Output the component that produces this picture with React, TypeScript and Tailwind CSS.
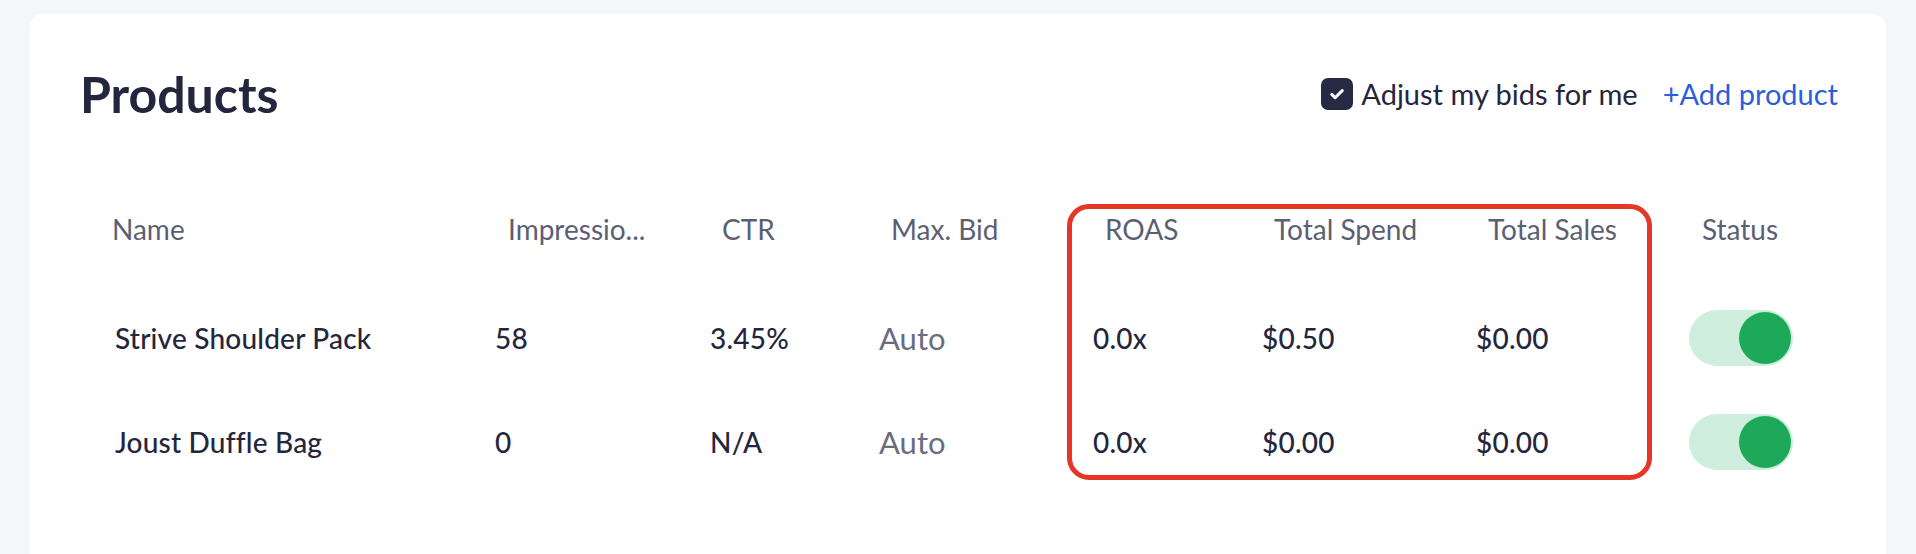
import { useState } from 'react';

type Product = {
  name: string;
  impressions: string;
  ctr: string;
  maxBid: string;
  roas: string;
  spend: string;
  sales: string;
  active: boolean;
};

const products: Product[] = [
  { name: 'Strive Shoulder Pack', impressions: '58', ctr: '3.45%', maxBid: 'Auto', roas: '0.0x', spend: '$0.50', sales: '$0.00', active: true },
  { name: 'Joust Duffle Bag', impressions: '0', ctr: 'N/A', maxBid: 'Auto', roas: '0.0x', spend: '$0.00', sales: '$0.00', active: true },
];

// explicit placement so the highlight box can share cells with the table
const cols = ['col-start-1', 'col-start-2', 'col-start-3', 'col-start-4', 'col-start-5', 'col-start-6', 'col-start-7', 'col-start-8'];
const rows = ['row-start-1', 'row-start-2', 'row-start-3'];

const headers = [
  { label: 'Name', pad: 'pl-[32px]' },
  { label: 'Impressio...', pad: 'pl-[13px]' },
  { label: 'CTR', pad: 'pl-[12px]' },
  { label: 'Max. Bid', pad: 'pl-[12px]' },
  { label: 'ROAS', pad: 'pl-[12px]' },
  { label: 'Total Spend', pad: 'pl-[12px]' },
  { label: 'Total Sales', pad: 'pl-[12px]' },
  { label: 'Status', pad: 'pl-[13px]' },
];

const Toggle = ({ on, onChange }: { on: boolean; onChange: () => void }) => (
  <button
    type="button"
    onClick={onChange}
    className={`flex items-center w-[104px] h-[56px] rounded-full px-[2px] ${on ? 'bg-[#cfeedd] justify-end' : 'bg-gray-200 justify-start'}`}
  >
    <span className={`block w-[52px] h-[52px] rounded-full ${on ? 'bg-[#1ea95a] ring-1 ring-[#bff3d2]' : 'bg-white'}`} />
  </button>
);

export default function App() {
  const [adjust, setAdjust] = useState(true);
  const [status, setStatus] = useState(products.map(p => p.active));

  const header = 'row-start-1 h-[82px] pt-[7px] text-[28px] leading-[36px] text-[#5c5f73] whitespace-nowrap';
  const base = 'h-[104px] flex items-center whitespace-nowrap';
  const cell = `${base} text-[28px] tracking-[0.2px] font-medium text-[#24263d]`;
  const muted = `${base} text-[31px] font-normal text-[#6a6c80]`;

  return (
    <div className="min-h-screen bg-[#f5f6f9] pt-[14px] px-[30px] font-['Lato',sans-serif]">
      <div className="bg-white rounded-[14px] min-h-[580px] pt-[52px] pl-[50px] pr-[48px]">
        <div className="flex items-center justify-between h-[56px]">
          <h2 className="text-[50px] font-bold text-[#24263d] leading-none">Products</h2>
          <div className="flex items-center">
            <button
              type="button"
              onClick={() => setAdjust(!adjust)}
              className={`w-[32px] h-[32px] rounded-[7px] flex items-center justify-center ${adjust ? 'bg-[#272a44]' : 'border-2 border-[#272a44]'}`}
            >
              {adjust && (
                <svg viewBox="0 0 24 24" className="w-[18px] h-[18px]" fill="none" stroke="white" strokeWidth={4} strokeLinecap="round" strokeLinejoin="round">
                  <path d="M5 12.5l4.5 4.5L19 7.5" />
                </svg>
              )}
            </button>
            <span className="ml-[8px] text-[29px] text-[#24263d]">Adjust my bids for me</span>
            <a href="#" className="ml-[25px] text-[29px] text-[#2b5fd9]">+Add product</a>
          </div>
        </div>

        <div className="mt-[82px] grid grid-cols-[415px_215px_169px_214px_169px_214px_213px_1fr] grid-rows-[82px_104px_104px]">
          {headers.map((h, c) => (
            <div key={h.label} className={`${header} ${cols[c]} ${h.pad}`}>{h.label}</div>
          ))}

          {products.map((p, i) => {
            const r = rows[i + 1];
            return (
              <div key={p.name} className="contents">
                <div className={`${cell} ${r} ${cols[0]} pl-[35px]`}>{p.name}</div>
                <div className={`${cell} ${r} ${cols[1]}`}>{p.impressions}</div>
                <div className={`${cell} ${r} ${cols[2]}`}>{p.ctr}</div>
                <div className={`${muted} ${r} ${cols[3]}`}>{p.maxBid}</div>
                <div className={`${cell} ${r} ${cols[4]}`}>{p.roas}</div>
                <div className={`${cell} ${r} ${cols[5]}`}>{p.spend}</div>
                <div className={`${cell} ${r} ${cols[6]}`}>{p.sales}</div>
                <div className={`h-[104px] flex items-center ${r} ${cols[7]}`}>
                  <Toggle
                    on={status[i]}
                    onChange={() => setStatus(s => s.map((v, j) => (j === i ? !v : v)))}
                  />
                </div>
              </div>
            );
          })}

          {/* highlight around the return columns */}
          <div className="col-start-5 col-end-8 row-start-1 row-end-4 ml-[-26px] mr-[37px] mb-[14px] border-[5px] border-[#e53628] rounded-[22px] pointer-events-none" />
        </div>
      </div>
    </div>
  );
}
